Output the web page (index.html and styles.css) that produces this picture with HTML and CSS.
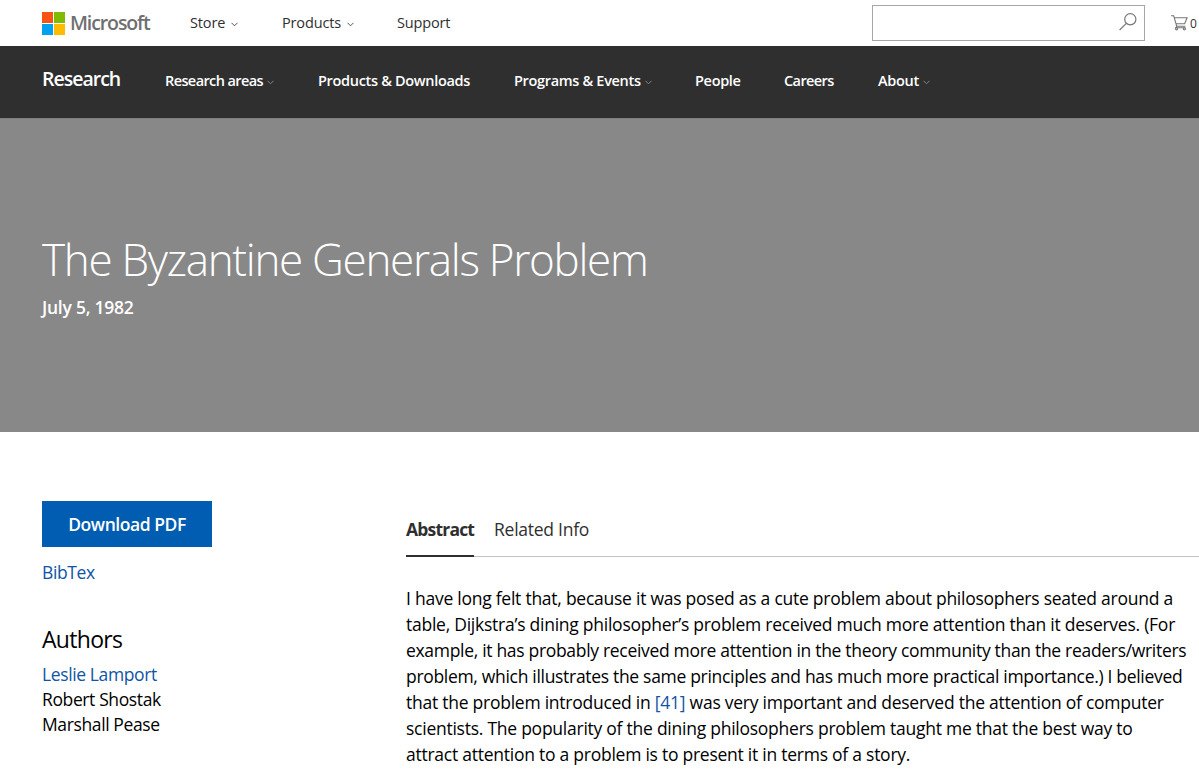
FILE: index.html
```
<!DOCTYPE html>
<html lang="en">
<head>
<meta charset="utf-8">
<title>The Byzantine Generals Problem</title>
<link rel="stylesheet" href="styles.css">
</head>
<body>
<header class="topbar">
  <a class="brand"><svg class="logo" viewBox="0 0 23 23"><path fill="#f65314" d="M0 0h11v11H0z"/><path fill="#7fbb00" d="M12 0h11v11H12z"/><path fill="#00a1f1" d="M0 12h11v11H0z"/><path fill="#ffbb00" d="M12 12h11v11H12z"/></svg><span class="wordmark">Microsoft</span></a>
  <a class="item item-store">Store<svg class="chev" viewBox="0 0 7 5"><path d="M.5 .8l3 3 3-3"/></svg></a>
  <a class="item item-products">Products<svg class="chev" viewBox="0 0 7 5"><path d="M.5 .8l3 3 3-3"/></svg></a>
  <a class="item">Support</a>
  <div class="search"><svg class="magnifier" viewBox="0 0 18 18"><circle cx="11.3" cy="6.3" r="5.6"/><path d="M7.3 10.3L.6 17"/></svg></div>
  <a class="cart"><svg class="cart-icon" viewBox="0 0 17 16"><path d="M0 .8h2.7l3 10.4h8.6M3.2 2.7h12.9l-2.5 6H5.2M5.7 11.2l-.9 1.5h9.6"/><circle cx="5.6" cy="13.8" r="1.1"/><circle cx="13.4" cy="13.8" r="1.1"/></svg><span>0</span></a>
</header>
<nav class="subnav">
  <a class="section">Research</a>
  <a class="item item-areas">Research areas<svg class="chev" viewBox="0 0 7 5"><path d="M.5 .8l3 3 3-3"/></svg></a>
  <a class="item item-downloads">Products &amp; Downloads</a>
  <a class="item item-programs">Programs &amp; Events<svg class="chev" viewBox="0 0 7 5"><path d="M.5 .8l3 3 3-3"/></svg></a>
  <a class="item item-people">People</a>
  <a class="item item-careers">Careers</a>
  <a class="item item-about">About<svg class="chev" viewBox="0 0 7 5"><path d="M.5 .8l3 3 3-3"/></svg></a>
</nav>
<section class="hero">
  <h1>The Byzantine Generals Problem</h1>
  <p class="date">July 5, 1982</p>
</section>
<main class="content">
  <aside class="side">
    <a class="button">Download PDF</a>
    <a class="link bibtex">BibTex</a>
    <h2>Authors</h2>
    <ul class="authors">
      <li class="link">Leslie Lamport</li>
      <li>Robert Shostak</li>
      <li>Marshall Pease</li>
    </ul>
  </aside>
  <article class="main">
    <div class="tabs"><a class="tab active">Abstract</a><a class="tab">Related Info</a></div>
    <p class="abstract">I have long felt that, because it was posed as a cute problem about philosophers seated around a<br>
    table, Dijkstra’s dining philosopher’s problem received much more attention than it deserves. (For<br>
    <span class="snug">example, it has probably received more attention in the theory community than the readers/writers</span><br>
    <span class="snug">problem, which illustrates the same principles and has much more practical importance.) I believed</span><br>
    that the problem introduced in <a class="link">[41]</a> was very important and deserved the attention of computer<br>
    scientists. The popularity of the dining philosophers problem taught me that the best way to<br>
    attract attention to a problem is to present it in terms of a story.</p>
  </article>
</main>
</body>
</html>
```
FILE: styles.css
```
* { box-sizing: border-box; }
body {
  margin: 0;
  height: 772px;
  overflow: hidden;
  background: #fff;
  color: #000;
  font-family: "Open Sans", sans-serif;
  font-size: 17.5px;
  letter-spacing: -.25px;
}
h1, h2, p, ul { margin: 0; padding: 0; }

.topbar, .subnav { display: flex; padding-left: 42px; white-space: nowrap; }
.item { flex: none; font-size: 14.5px; }
.chev { width: 7px; height: 5px; margin-left: 6px; vertical-align: 1px; fill: none; stroke: #555; }

.topbar { height: 46px; align-items: center; color: #2f2f2f; }
.topbar .item { padding-bottom: 2px; letter-spacing: -.15px; }
.brand { display: flex; align-items: center; width: 148px; height: 23px; }
.logo { flex: none; width: 23px; height: 23px; }
.wordmark { margin-left: 5px; padding-bottom: 2px; color: #6f6f6f; font-size: 19.5px; font-weight: 600; letter-spacing: -1.1px; line-height: 23px; }
.item-store { width: 92px; }
.item-products { width: 115px; }
.search {
  display: flex;
  justify-content: flex-end;
  width: 273px;
  height: 36px;
  margin-left: auto;
  padding: 7px 7px 0 0;
  border: 1px solid #a6a6a6;
}
.magnifier { width: 18px; height: 18px; fill: none; stroke: #777; stroke-width: 1.2; }
.cart { display: flex; align-items: center; width: 28px; margin-left: 26px; font-size: 12px; }
.cart span { letter-spacing: -.5px; }
.cart-icon { width: 17px; height: 16px; margin-right: 2px; fill: none; stroke: #777; stroke-width: 1.1; }

.subnav {
  height: 72px;
  align-items: baseline;
  background: #2f2f2f;
  color: #fff;
  font-weight: 600;
  line-height: 65px;
}
.subnav .item { letter-spacing: -.32px; }
.subnav .chev { margin-left: 4px; stroke: #858585; }
.section { width: 123px; font-size: 19.5px; letter-spacing: -1px; }
.item-areas { width: 153px; }
.subnav .item-areas { letter-spacing: -.6px; }
.item-downloads { width: 196px; }
.item-programs { width: 181px; }
.item-people { width: 89px; }
.item-careers { width: 94px; }
.subnav .item-careers { letter-spacing: -.6px; }

.hero { height: 314px; padding: 113px 42px 0; background: #888; color: #fff; box-shadow: inset 0 1px #7e7e7e; }
h1 { font-size: 44px; font-weight: 300; line-height: 56px; letter-spacing: -1.3px; white-space: nowrap; }
.date { margin-top: 7px; font-weight: 600; line-height: 26px; }

.content { display: flex; padding-left: 42px; }
.side { flex: none; width: 364px; padding-top: 69px; line-height: 25px; }
.button {
  display: block;
  width: 170px;
  height: 46px;
  background: #005db2;
  color: #fff;
  font-weight: 600;
  line-height: 47px;
  letter-spacing: -.45px;
  text-align: center;
}
.link { color: #0f54a6; }
.bibtex { display: block; margin-top: 13px; letter-spacing: -.4px; }
h2 { margin-top: 39px; font-size: 23px; font-weight: 400; line-height: 30px; letter-spacing: -.7px; }
.authors { margin-top: 8px; list-style: none; letter-spacing: -.38px; }

.main { flex: 1; min-width: 0; padding-top: 84px; line-height: 26px; }
.tabs { display: flex; gap: 20px; height: 41px; box-shadow: inset 0 -1px #c3c3c3; color: #2f2f2f; }
.tab { height: 41px; }
.active { width: 68px; border-bottom: 2px solid #2f2f2f; font-weight: 700; letter-spacing: -.8px; }
.abstract { margin-top: 28px; white-space: nowrap; }
.snug { letter-spacing: -.31px; }
```
